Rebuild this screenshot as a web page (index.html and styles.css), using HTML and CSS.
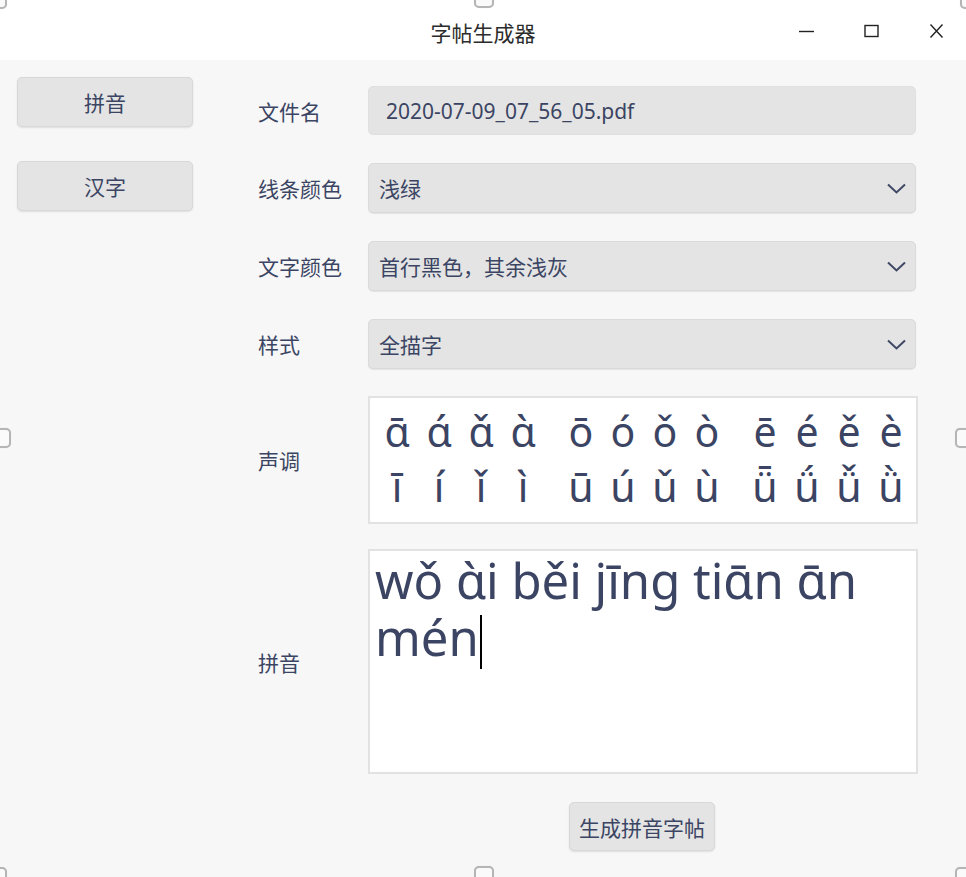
FILE: index.html
```html
<!DOCTYPE html>
<html lang="zh-CN">
<head>
<meta charset="utf-8">
<title>字帖生成器</title>
<link rel="stylesheet" href="styles.css">
</head>
<body>
<div class="window">
  <header class="titlebar">
    <div class="spacer"></div>
    <div class="title">字帖生成器</div>
    <div class="controls">
      <svg class="ctl" width="15" height="14" viewBox="0 0 15 14"><path d="M0 7.5h15" stroke="#222" stroke-width="1.4"/></svg>
      <svg class="ctl" width="15" height="14" viewBox="0 0 15 14"><rect x="1" y="1.5" width="13" height="11" fill="none" stroke="#222" stroke-width="1.4"/></svg>
      <svg class="ctl" width="15" height="14" viewBox="0 0 15 14"><path d="M1.5 0.5l12 13M13.5 0.5l-12 13" stroke="#222" stroke-width="1.4"/></svg>
    </div>
  </header>
  <main class="content">
    <nav class="side">
      <button class="side-btn">拼音</button>
      <button class="side-btn">汉字</button>
    </nav>
    <section class="form">
      <div class="row">
        <label class="label">文件名</label>
        <div class="field input">2020-07-09_07_56_05.pdf</div>
      </div>
      <div class="row">
        <label class="label">线条颜色</label>
        <div class="field combo"><span>浅绿</span><svg class="chev" width="19" height="11" viewBox="0 0 19 11"><path d="M1 1.5l8.5 8 8.5-8" fill="none" stroke="#3f4864" stroke-width="2"/></svg></div>
      </div>
      <div class="row">
        <label class="label">文字颜色</label>
        <div class="field combo"><span>首行黑色，其余浅灰</span><svg class="chev" width="19" height="11" viewBox="0 0 19 11"><path d="M1 1.5l8.5 8 8.5-8" fill="none" stroke="#3f4864" stroke-width="2"/></svg></div>
      </div>
      <div class="row">
        <label class="label">样式</label>
        <div class="field combo"><span>全描字</span><svg class="chev" width="19" height="11" viewBox="0 0 19 11"><path d="M1 1.5l8.5 8 8.5-8" fill="none" stroke="#3f4864" stroke-width="2"/></svg></div>
      </div>
      <div class="row row-tones">
        <label class="label">声调</label>
        <div class="field tones">
          <div class="tone-line">
            <div class="grp"><span>ɑ̄</span><span>ɑ́</span><span>ɑ̌</span><span>ɑ̀</span></div>
            <div class="grp"><span>ō</span><span>ó</span><span>ǒ</span><span>ò</span></div>
            <div class="grp"><span>ē</span><span>é</span><span>ě</span><span>è</span></div>
          </div>
          <div class="tone-line">
            <div class="grp"><span>ī</span><span>í</span><span>ǐ</span><span>ì</span></div>
            <div class="grp"><span>ū</span><span>ú</span><span>ǔ</span><span>ù</span></div>
            <div class="grp"><span>ǖ</span><span>ǘ</span><span>ǚ</span><span>ǜ</span></div>
          </div>
        </div>
      </div>
      <div class="row row-pinyin">
        <label class="label">拼音</label>
        <div class="field pinyin">wǒ ɑ̀i běi jīng tiɑ̄n ɑ̄n mén<span class="caret"></span></div>
      </div>
      <div class="row row-action">
        <div class="label"></div>
        <div class="action"><button class="gen-btn">生成拼音字帖</button></div>
      </div>
    </section>
  </main>
  <span class="handle h-tl"></span>
  <span class="handle h-tm"></span>
  <span class="handle h-tr"></span>
  <span class="handle h-ml"></span>
  <span class="handle h-mr"></span>
  <span class="handle h-bl"></span>
  <span class="handle h-bm"></span>
  <span class="handle h-br"></span>
</div>
</body>
</html>
```
FILE: styles.css
```css
* { box-sizing: border-box; }
html, body { margin: 0; padding: 0; }
body {
  font-family: "Noto Sans", "Noto Sans CJK SC", sans-serif;
  color: #3b4563;
  background: #f7f7f7;
  overflow: hidden;
}
.window {
  position: relative;
  width: 966px;
  height: 877px;
  background: #f7f7f7;
  overflow: hidden;
}
.titlebar {
  height: 60px;
  background: #ffffff;
  display: grid;
  grid-template-columns: 1fr auto 1fr;
  align-items: center;
}
.title {
  font-family: "Noto Sans CJK SC", sans-serif;
  font-size: 21px;
  color: #2b2b2b;
  padding-top: 4px;
}
.controls {
  display: flex;
  justify-content: flex-end;
  align-items: center;
  gap: 50px;
  padding-right: 22px;
  padding-top: 2px;
}
.ctl { display: block; }
.content {
  display: flex;
  padding: 17px 0 0 17px;
}
.side {
  width: 176px;
  display: flex;
  flex-direction: column;
  gap: 34px;
}
.side-btn, .gen-btn {
  font-family: "Noto Sans CJK SC", sans-serif;
  font-size: 21px;
  color: #3b4563;
  background: #e4e4e4;
  border: 1px solid #d8d8d8;
  border-radius: 5px;
  box-shadow: 0 1px 2px rgba(0,0,0,0.10);
  height: 50px;
  padding: 0;
}
.side-btn { width: 176px; }
.form {
  margin-left: 65px;
  margin-top: 9px;
  display: flex;
  flex-direction: column;
}
.row {
  display: flex;
  align-items: center;
}
.row + .row { margin-top: 28px; }
.row.row-tones { margin-top: 27px; }
.row.row-pinyin { margin-top: 25px; }
.label {
  width: 110px;
  font-family: "Noto Sans CJK SC", sans-serif;
  font-size: 21px;
  color: #3b4563;
}
.field {
  width: 548px;
}
.input {
  height: 49px;
  background: #e4e4e4;
  border: 1px solid #e0e0e0;
  border-radius: 5px;
  display: flex;
  align-items: center;
  padding-left: 17px;
  font-size: 21px;
  font-family: "Noto Sans", sans-serif;
}
.combo {
  height: 50px;
  background: #e4e4e4;
  border: 1px solid #dadada;
  border-radius: 5px;
  box-shadow: 0 1px 1px rgba(0,0,0,0.08);
  display: flex;
  align-items: center;
  justify-content: space-between;
  padding: 0 9px 0 10px;
  font-family: "Noto Sans CJK SC", sans-serif;
  font-size: 21px;
}
.chev { display: block; }
.tones {
  width: 550px;
  height: 128px;
  background: #ffffff;
  border: 2px solid #e2e2e2;
  padding: 6px 0 0 6px;
  font-family: "Noto Sans", "DejaVu Sans", sans-serif;
  font-size: 41px;
  line-height: 55px;
}
.tone-line {
  display: flex;
  gap: 16px;
}
.grp {
  display: grid;
  grid-template-columns: repeat(4, 42px);
}
.grp span { text-align: center; }
.pinyin {
  width: 550px;
  height: 225px;
  background: #ffffff;
  border: 2px solid #e2e2e2;
  padding: 1px 0 0 5px;
  font-family: "Noto Sans", "DejaVu Sans", sans-serif;
  font-size: 49px;
  line-height: 57px;
}
.caret {
  display: inline-block;
  width: 2px;
  height: 54px;
  background: #000;
  vertical-align: -13px;
  margin-left: 1px;
}
.row-action { margin-top: 28px; }
.action {
  width: 548px;
  display: flex;
  justify-content: center;
}
.gen-btn {
  width: 146px;
  height: 49px;
}
.handle {
  position: absolute;
  width: 20px;
  height: 20px;
  border: 2px solid #b5b5b5;
  border-radius: 5px;
  background: #fafafa;
  box-shadow: 0 0 1px rgba(0,0,0,0.15);
}
.h-tl { left: -13px; top: -11px; }
.h-tm { left: 474px; top: -12px; }
.h-tr { left: 960px; top: -11px; }
.h-ml { left: -9px; top: 428px; }
.h-mr { left: 955px; top: 428px; }
.h-bl { left: -13px; top: 867px; }
.h-bm { left: 474px; top: 866px; }
.h-br { left: 955px; top: 867px; }
```
